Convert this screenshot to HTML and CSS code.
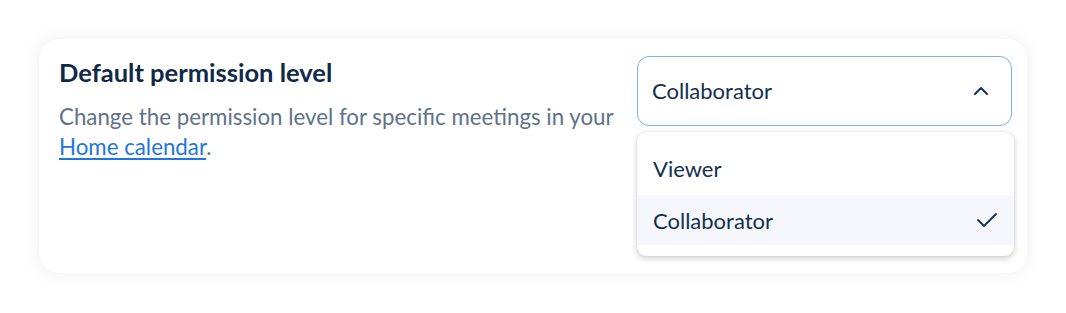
FILE: index.html
```html
<!DOCTYPE html>
<html lang="en">
<head>
<meta charset="utf-8">
<link rel="stylesheet" href="styles.css">
</head>
<body>
<div class="card">
  <div class="info">
    <h2 class="title">Default permission level</h2>
    <p class="desc">Change the permission level for specific meetings in your <a href="#" class="link">Home calendar</a>.</p>
  </div>
  <div class="select">
    <div class="trigger">
      <span class="value">Collaborator</span>
      <svg class="chev" width="16" height="10" viewBox="0 0 16 10"><path d="M2 8 L8 2 L14 8" fill="none" stroke="#14304f" stroke-width="2" stroke-linecap="round" stroke-linejoin="round"/></svg>
    </div>
    <div class="menu">
      <div class="option">Viewer</div>
      <div class="option selected">Collaborator
        <svg class="check" width="22" height="16" viewBox="0 0 22 16"><path d="M2 8 L8 14 L20 2" fill="none" stroke="#14304f" stroke-width="1.8" stroke-linecap="round" stroke-linejoin="round"/></svg>
      </div>
    </div>
  </div>
</div>
</body>
</html>
```

FILE: styles.css
```css
* { box-sizing: border-box; }
html, body { margin: 0; padding: 0; background: #ffffff; }
body {
  font-family: Lato, "Noto Sans", sans-serif;
  color: #14304f;
  padding: 39px 0 0 39px;
  width: 1066px;
  height: 313px;
  overflow: hidden;
}
.card {
  width: 988px;
  height: 234px;
  background: #fff;
  border-radius: 20px;
  box-shadow: 0 0 18px rgba(0, 0, 0, 0.07);
  padding: 17px 15px 0 20px;
  display: flex;
  justify-content: space-between;
  align-items: flex-start;
}
.info { width: 575px; }
.title {
  margin: 0;
  font-size: 25.5px;
  line-height: 32px;
  font-weight: 700;
  color: #10294a;
  letter-spacing: 0;
}
.desc {
  margin: 14px 0 0 0;
  font-size: 22.3px;
  line-height: 30px;
  color: #617189;
  letter-spacing: 0;
}
.link { color: #1f76e0; text-decoration: underline; text-underline-offset: 3px; }
.select { position: relative; width: 375px; }
.trigger {
  height: 70px;
  border: 1px solid #7eb0ea;
  border-radius: 12px;
  display: flex;
  align-items: center;
  justify-content: space-between;
  padding: 0 22px 0 14px;
  font-size: 22px;
  color: #14304f;
}
.value { position: relative; top: -1px; }
.chev { display: block; }
.menu {
  position: absolute;
  top: 76px;
  left: 0;
  width: 377px;
  height: 124px;
  background: #fff;
  border-radius: 9px;
  box-shadow: 0 2px 6px rgba(0, 0, 0, 0.22), 0 0 1px rgba(0,0,0,0.1);
  padding: 10px 0 11px 0;
  z-index: 2;
}
.option {
  height: 53px;
  display: flex;
  align-items: center;
  justify-content: space-between;
  padding: 0 16px 0 16px;
  font-size: 22px;
  color: #14304f;
}
.option.selected { background: #f5f7fc; height: 50px; }
.check { display: block; }
```
